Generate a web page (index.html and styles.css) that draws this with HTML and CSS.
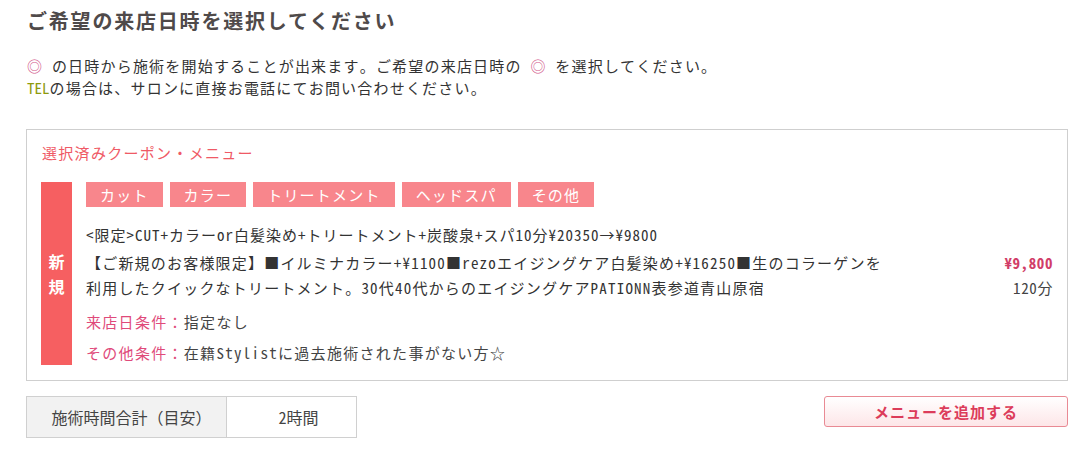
FILE: index.html
```html
<!DOCTYPE html>
<html lang="ja">
<head>
<meta charset="utf-8">
<link rel="stylesheet" href="styles.css">
</head>
<body>
<main class="page">
  <h1 class="title">ご希望の来店日時を選択してください</h1>
  <p class="note"><span class="mark">◎</span> の日時から施術を開始することが出来ます。ご希望の来店日時の <span class="mark">◎</span> を選択してください。<br><span class="tel">TEL</span>の場合は、サロンに直接お電話にてお問い合わせください。</p>

  <section class="coupon-box">
    <h2 class="box-title">選択済みクーポン・メニュー</h2>
    <div class="coupon">
      <div class="badge">新<br>規</div>
      <div class="coupon-body">
        <ul class="tags">
          <li class="tag">カット</li>
          <li class="tag">カラー</li>
          <li class="tag">トリートメント</li>
          <li class="tag">ヘッドスパ</li>
          <li class="tag">その他</li>
        </ul>
        <p class="coupon-name">&lt;限定&gt;CUT+カラーor白髪染め+トリートメント+炭酸泉+スパ10分¥20350→¥9800</p>
        <div class="coupon-main">
          <p class="desc">【ご新規のお客様限定】■イルミナカラー+¥1100■rezoエイジングケア白髪染め+¥16250■生のコラーゲンを利用したクイックなトリートメント。30代40代からのエイジングケアPATIONN表参道青山原宿</p>
          <div class="price">
            <span class="amount">¥9,800</span>
            <span class="time">120分</span>
          </div>
        </div>
        <p class="cond"><span class="label">来店日条件：</span>指定なし</p>
        <p class="cond"><span class="label">その他条件：</span>在籍Stylistに過去施術された事がない方☆</p>
      </div>
    </div>
  </section>

  <div class="footer">
    <table class="total">
      <tr>
        <th class="total-head">施術時間合計（目安）</th>
        <td class="total-value">2時間</td>
      </tr>
    </table>
    <button class="add-btn" type="button">メニューを追加する</button>
  </div>
</main>
</body>
</html>
```

FILE: styles.css
```css
* { box-sizing: border-box; }

body {
  margin: 0;
  background: #fff;
  color: #333;
  font-family: "Noto Sans Mono CJK JP", "Noto Sans CJK JP", sans-serif;
  font-weight: 500;
}

.page {
  width: 1042px;
  margin-left: 26px;
  padding-top: 7px;
}

.title {
  margin: 0 0 0 1px;
  font-family: "Noto Sans CJK JP", sans-serif;
  font-size: 20px;
  line-height: 28px;
  font-weight: 700;
  letter-spacing: 1.8px;
  color: #4f4a4a;
}

.note {
  margin: 20px 0 0 1px;
  font-size: 15px;
  line-height: 22px;
  letter-spacing: 1.2px;
  color: #333;
}

.mark { color: #d2578a; }
.tel { color: #8e9a0c; letter-spacing: 0; }

.coupon-box {
  margin-top: 30px;
  border: 1px solid #cfcfcf;
  padding: 12px 14px 15px;
}

.box-title {
  margin: 0 0 18px 1px;
  font-size: 15px;
  line-height: 22px;
  font-weight: 500;
  letter-spacing: 1.3px;
  color: #ef5a66;
}

.coupon {
  display: flex;
  gap: 14px;
}

.badge {
  width: 31px;
  flex: none;
  display: flex;
  align-items: center;
  justify-content: center;
  background: #f65f61;
  color: #fff;
  font-size: 16px;
  line-height: 25px;
  font-weight: 700;
  text-align: center;
}

.coupon-body { flex: 1; min-width: 0; padding-bottom: 1px; }

.tags {
  display: flex;
  gap: 7px;
  margin: 0;
  padding: 0;
  list-style: none;
}

.tag {
  height: 25px;
  padding: 0 14px;
  background: #f8868c;
  color: #fff;
  font-size: 15px;
  line-height: 25px;
  letter-spacing: 1.2px;
}

.coupon-name {
  margin: 17px 0 0;
  font-size: 15px;
  line-height: 22px;
  letter-spacing: 1px;
  color: #333;
}

.coupon-main {
  display: flex;
  justify-content: space-between;
  margin-top: 4px;
}

.desc {
  margin: 0;
  width: 810px;
  font-size: 15px;
  line-height: 25px;
  letter-spacing: 1.2px;
  color: #333;
}

.price {
  display: flex;
  flex-direction: column;
  align-items: flex-end;
  font-size: 15px;
  line-height: 25px;
  letter-spacing: 0.6px;
}

.amount { color: #d13d68; font-weight: 700; }
.time { color: #444; }

.cond {
  margin: 11px 0 0;
  font-size: 15px;
  line-height: 22px;
  letter-spacing: 1.3px;
  color: #444;
}

.cond + .cond { margin-top: 9px; }

.label { color: #e04a7a; }

.footer {
  display: flex;
  justify-content: space-between;
  align-items: flex-start;
  margin-top: 15px;
}

.total {
  border-collapse: collapse;
  font-size: 16px;
}

.total-head,
.total-value {
  height: 41px;
  border: 1px solid #d0d0d0;
  font-weight: 500;
  color: #444;
  text-align: center;
  padding: 0 0 0 10px;
}

.total-head {
  width: 200px;
  background: #f2f2f2;
}

.total-value { width: 130px; background: #fff; padding-left: 14px; }

.add-btn {
  width: 244px;
  height: 31px;
  border: 1px solid #e98a94;
  border-radius: 3px;
  background: linear-gradient(#ffffff, #fde6e8);
  color: #dc3c5a;
  font-family: "Noto Sans CJK JP", sans-serif;
  font-size: 15px;
  font-weight: 700;
  letter-spacing: 1px;
  padding: 0;
}
```
